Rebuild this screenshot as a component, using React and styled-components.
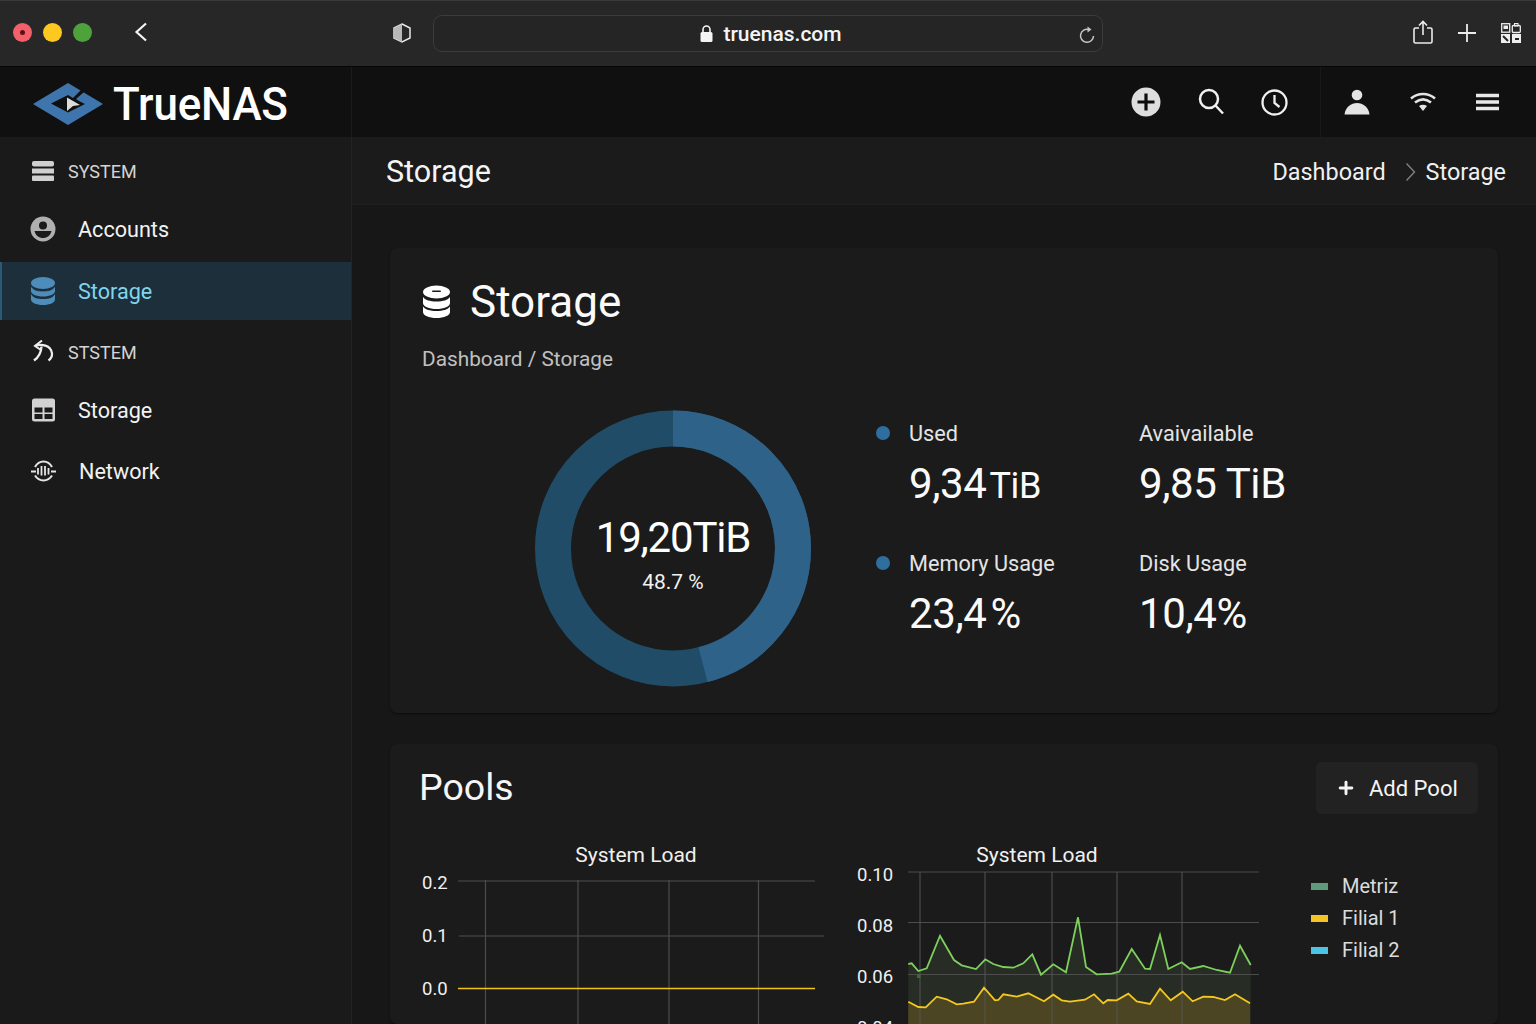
import styled, { createGlobalStyle } from 'styled-components'
import { Plus } from 'lucide-react'

const GlobalStyle = createGlobalStyle`
    html, body {
        margin: 0;
        height: 100%;
        background: #171717;
        overflow: hidden;
    }
    body {
        font-family: Roboto, "Liberation Sans", sans-serif;
        color: #f2f2f2;
    }
    * {
        box-sizing: border-box;
    }
`

// browser chrome

const Page = styled.div`
    display: flex;
    flex-direction: column;
    width: 1536px;
    height: 1024px;
    overflow: hidden;
`

const BrowserBar = styled.header`
    display: flex;
    align-items: center;
    flex: none;
    height: 67px;
    background: #272727;
    border-top: 1px solid #3a3a3a;
    border-bottom: 1px solid #050505;
`

const Lights = styled.div`
    display: flex;
    align-items: center;
    gap: 11px;
    margin-left: 13px;
    margin-bottom: 2px;
`

const Light = styled.span`
    display: flex;
    align-items: center;
    justify-content: center;
    width: 19px;
    height: 19px;
    border-radius: 50%;
    background: ${(p) => p.$color};

    i {
        width: 5px;
        height: 5px;
        border-radius: 50%;
        background: #5c1016;
    }
`

const ChromeIcon = styled.svg`
    display: block;
    flex: none;
    margin-left: ${(p) => p.$left || 0}px;
    margin-bottom: ${(p) => p.$bottom || 0}px;
`

const UrlBar = styled.div`
    display: flex;
    align-items: center;
    justify-content: center;
    position: relative;
    flex: none;
    width: 670px;
    height: 37px;
    margin-left: 21px;
    padding-left: 6px;
    gap: 10px;
    border: 1px solid #3c3c3c;
    border-radius: 9px;
    background: #252525;
    font-size: 21px;
    font-weight: 500;
    color: #f4f4f4;
`

const Reload = styled.svg`
    position: absolute;
    right: 6px;
    top: 10px;
`

// app top bar

const TopBar = styled.div`
    display: flex;
    flex: none;
    height: 70px;
    background: #101010;
`

const LogoCell = styled.div`
    display: flex;
    align-items: center;
    flex: none;
    width: 352px;
    padding: 3px 0 0 33px;
    gap: 10px;
    border-right: 1px solid #1b1b1b;
`

const LogoText = styled.span`
    font-size: 47px;
    font-weight: 500;
    line-height: 1;
    color: #fff;
    letter-spacing: -0.2px;
    transform: scaleX(0.935);
    transform-origin: left center;
`

const TopActions = styled.div`
    display: flex;
    align-items: center;
    flex: 1;
`

const ToolGroup = styled.div`
    display: flex;
    align-items: center;
    justify-content: flex-end;
    flex: 1;
    height: 100%;
    padding-right: 32px;
    gap: 37px;
`

const UserGroup = styled.div`
    display: flex;
    align-items: center;
    flex: none;
    width: 216px;
    height: 100%;
    padding-left: 23px;
    gap: 40px;
    border-left: 1px solid #191919;
`

// layout below the bars

const Body = styled.div`
    display: flex;
    flex: 1;
    min-height: 0;
`

const Sidebar = styled.nav`
    flex: none;
    width: 352px;
    padding-top: 5px;
    background: #1a1a1a;
    border-right: 1px solid #242424;
`

const NavRow = styled.div`
    display: flex;
    align-items: center;
    height: 58px;
    margin-top: ${(p) => p.$mt || 0}px;
    padding-left: ${(p) => (p.$active ? 28 : 30)}px;
    gap: ${(p) => (p.$heading ? 12 : 22)}px;
    background: ${(p) => (p.$active ? '#1e2f3c' : 'transparent')};
    border-left: ${(p) => (p.$active ? '2px solid #2b5a78' : 'none')};
    font-size: ${(p) => (p.$heading ? 18 : 21.6)}px;
    color: ${(p) => (p.$active ? '#7fd6ec' : p.$heading ? '#d4d4d4' : '#f2f2f2')};
`

const Main = styled.main`
    display: flex;
    flex-direction: column;
    flex: 1;
    min-width: 0;
`

const PageHeader = styled.div`
    display: flex;
    align-items: center;
    justify-content: space-between;
    flex: none;
    height: 68px;
    padding: 0 30px 0 34px;
    background: #1b1b1b;
    border-bottom: 1px solid #202020;
`

const PageTitle = styled.h1`
    margin: 2px 0 0;
    font-size: 30.5px;
    font-weight: 400;
    color: #f4f4f4;
`

const Crumbs = styled.div`
    display: flex;
    align-items: center;
    padding-top: 2px;
    font-size: 23.4px;
    color: #f0f0f0;

    svg {
        margin: 0 10px 0 19px;
    }
`

const Content = styled.div`
    display: flex;
    flex-direction: column;
    gap: 31px;
    padding: 43px 38px 0;
`

const Card = styled.section`
    flex: none;
    background: #1b1b1b;
    border-radius: 7px;
    box-shadow: 0 1px 2px rgba(0, 0, 0, 0.5);
`

const StorageCard = styled(Card)`
    height: 465px;
    padding: 28px 32px 26px;
`

const CardTitle = styled.div`
    display: flex;
    align-items: center;
    gap: 19px;
    height: 52px;
    font-size: 44px;
    color: #fafafa;
`

const CardSub = styled.div`
    margin-top: 18px;
    font-size: 20.8px;
    line-height: 26px;
    color: #c0c0c0;
`

const Overview = styled.div`
    display: flex;
    margin-top: 38px;
    margin-left: 113px;
    gap: 65px;
`

const Donut = styled.div`
    position: relative;
    flex: none;
    width: 276px;
    height: 277px;
`

const DonutText = styled.div`
    position: absolute;
    inset: 0;
    display: flex;
    flex-direction: column;
    align-items: center;
    justify-content: center;
    padding-top: 14px;
`

const DonutValue = styled.div`
    font-size: 42px;
    line-height: 50px;
    letter-spacing: -1.2px;
    color: #fff;
`

const DonutPct = styled.div`
    margin-top: 6px;
    margin-bottom: 3px;
    font-size: 21px;
    line-height: 26px;
    color: #f2f2f2;
`

const Stats = styled.div`
    display: grid;
    grid-template-columns: 263px 240px;
    grid-auto-rows: 130px;
    padding-top: 10px;
`

const StatLabel = styled.div`
    display: flex;
    align-items: center;
    gap: 19px;
    height: 26px;
    font-size: 21.7px;
    color: #e4e4e4;
`

const Dot = styled.span`
    flex: none;
    width: 14px;
    height: 14px;
    border-radius: 50%;
    background: #2f6f9f;
`

const StatValue = styled.div`
    margin-top: 13px;
    padding-left: ${(p) => (p.$indent ? 33 : 0)}px;
    font-size: 42px;
    line-height: 50px;
    letter-spacing: -0.4px;
    word-spacing: ${(p) => (p.$tight ? -6 : 0)}px;
    color: #fafafa;

    small {
        margin-left: 3px;
        font-size: 36px;
    }
`

const PoolsCard = styled(Card)`
    padding: 18px 20px 0 29px;
`

const PoolsHead = styled.div`
    display: flex;
    align-items: center;
    justify-content: space-between;
`

const PoolsTitle = styled.h2`
    margin: 0 0 2px;
    font-size: 37.5px;
    font-weight: 400;
    color: #f6f6f6;
`

const AddButton = styled.button`
    display: flex;
    align-items: center;
    gap: 13px;
    height: 52px;
    width: 162px;
    padding: 0 0 0 20px;
    border: 0;
    border-radius: 6px;
    background: #222222;
    font-family: inherit;
    font-size: 22px;
    color: #f4f4f4;
`

const ChartRow = styled.div`
    display: flex;
    align-items: flex-start;
    gap: 20px;
    margin-top: 26px;
    margin-left: 1px;
`

const ChartSvg = styled.svg`
    display: block;
    flex: none;

    text {
        font-family: Roboto, "Liberation Sans", sans-serif;
        fill: #f0f0f0;
    }
`

const Legend = styled.div`
    display: flex;
    flex-direction: column;
    gap: 6px;
    margin-left: 21px;
    margin-top: 33px;
`

const LegendItem = styled.div`
    display: flex;
    align-items: center;
    gap: 14px;
    height: 26px;
    font-size: 20px;
    color: #dcdcdc;

    i {
        width: 17px;
        height: 7px;
        background: ${(p) => p.$color};
    }
`

// icons

const TrueNasLogo = () => (
    <svg width="70" height="42" viewBox="33 83 70 42">
        <polygon points="33,104 68,83 103,104 68,125" fill="#3f75ad" />
        <polygon points="51,103.500 68,95 73,98 81,90 84,92 76,99 79,101 85,104 68,112.500" fill="#101010" />
        <polygon points="67,97.500 80,105 73,106 67,111" fill="#dcdcdc" />
    </svg>
)

const ShieldIcon = () => (
    <ChromeIcon $left={244} $bottom={2} width="20" height="20" viewBox="0 0 20 20">
        <polygon points="10,1 18,5 18,15 10,19 2,15 2,5" fill="none" stroke="#e8e8e8" strokeWidth="1.500" />
        <polygon points="10,1 2,5 2,15 10,19" fill="#b8b8b8" />
    </ChromeIcon>
)

const LockIcon = () => (
    <svg width="13" height="17" viewBox="0 0 13 17">
        <path d="M3 7V4.500a3.500 3.500 0 0 1 7 0V7" fill="none" stroke="#f4f4f4" strokeWidth="1.600" />
        <rect x="0.500" y="7" width="12" height="10" rx="1.500" fill="#f4f4f4" />
    </svg>
)

const ReloadIcon = () => (
    <Reload width="18" height="18" viewBox="0 0 18 18">
        <path d="M11 3.600a6.500 6.500 0 1 0 4.500 6.400" fill="none" stroke="#c6c6c6" strokeWidth="1.500" />
        <path d="M9.500 0.500L13.500 3.400L9.500 6.500Z" fill="#c6c6c6" />
    </Reload>
)

const ShareIcon = () => (
    <ChromeIcon $left={310} $bottom={4} width="20" height="24" viewBox="0 0 20 24">
        <path d="M6 8H2.500A1.500 1.500 0 0 0 1 9.500v12A1.500 1.500 0 0 0 2.500 23h15a1.500 1.500 0 0 0 1.500-1.500v-12A1.500 1.500 0 0 0 17.500 8H14" fill="none" stroke="#ececec" strokeWidth="1.600" />
        <path d="M10 15V2M6 5.500L10 1.500L14 5.500" fill="none" stroke="#ececec" strokeWidth="1.600" />
    </ChromeIcon>
)

const GridIcon = () => (
    <ChromeIcon $left={24} $bottom={2} width="20" height="20" viewBox="0 0 20 20">
        <rect x="0.700" y="0.700" width="8" height="8.500" fill="none" stroke="#eee" strokeWidth="1.300" />
        <rect x="2.500" y="2.500" width="4.500" height="3.500" fill="#eee" />
        <rect x="11.300" y="2.500" width="8" height="7" rx="1" fill="none" stroke="#eee" strokeWidth="1.300" />
        <rect x="13.500" y="0.500" width="3.500" height="2.500" fill="none" stroke="#eee" strokeWidth="1" />
        <rect x="0" y="11" width="9" height="9" fill="#eee" />
        <path d="M2 13l5 5" stroke="#222" strokeWidth="2" />
        <rect x="11" y="11" width="9" height="9" fill="#eee" />
        <rect x="14" y="15" width="4" height="2" fill="#222" />
    </ChromeIcon>
)

const AddCircleIcon = () => (
    <svg width="30" height="30" viewBox="0 0 30 30">
        <circle cx="15" cy="15" r="14.500" fill="#dedede" />
        <path d="M15 6.500v17M6.500 15h17" stroke="#0d0d0d" strokeWidth="3.200" />
    </svg>
)

const SearchIcon = () => (
    <svg width="26" height="28" viewBox="0 0 26 28">
        <circle cx="11" cy="11" r="9" fill="none" stroke="#f0f0f0" strokeWidth="2.500" />
        <path d="M17.500 17.500L25 25.500" stroke="#f0f0f0" strokeWidth="2.500" />
    </svg>
)

const ClockIcon = () => (
    <svg width="27" height="27" viewBox="0 0 27 27">
        <circle cx="13.500" cy="13.500" r="12" fill="none" stroke="#f0f0f0" strokeWidth="2.300" />
        <path d="M13.500 6v8l5 4" fill="none" stroke="#f0f0f0" strokeWidth="2.300" />
    </svg>
)

const PersonIcon = () => (
    <svg width="26" height="26" viewBox="0 0 26 26">
        <circle cx="13" cy="6" r="5.300" fill="#e4e4e4" />
        <path d="M0.500 25.500C1.500 18 7 14 13 14s11.500 4 12.500 11.500Z" fill="#e4e4e4" />
    </svg>
)

const WifiIcon = () => (
    <svg width="26" height="20" viewBox="0 0 26 20">
        <path d="M1 6.500C8 0.500 18 0.500 25 6.500" fill="none" stroke="#e4e4e4" strokeWidth="2.600" />
        <path d="M5 10.500C10 6.500 16 6.500 21 10.500" fill="none" stroke="#e4e4e4" strokeWidth="2.600" />
        <path d="M9 14C11.500 12.300 14.500 12.300 17 14L13 19Z" fill="#e4e4e4" />
    </svg>
)

const MenuIcon = () => (
    <svg width="23" height="18" viewBox="0 0 23 18">
        <path d="M0 2.500h23M0 9h23M0 15.500h23" stroke="#e8e8e8" strokeWidth="3.600" />
    </svg>
)

const ServerIcon = () => (
    <svg width="26" height="22" viewBox="0 0 26 22">
        <rect x="2" y="1" width="22" height="5.500" rx="2" fill="#d0d0d0" />
        <rect x="2" y="8.500" width="22" height="5" fill="#d0d0d0" />
        <rect x="2" y="15.500" width="22" height="5.500" rx="1" fill="#d0d0d0" />
    </svg>
)

const AccountIcon = () => (
    <svg width="26" height="26" viewBox="0 0 26 26">
        <circle cx="13" cy="13" r="12.500" fill="#b0b0b0" />
        <circle cx="13" cy="9.500" r="4" fill="#1a1a1a" />
        <path d="M4.500 15h17c-1 4.500-4.500 7-8.500 7s-7.500-2.500-8.500-7Z" fill="#1a1a1a" />
    </svg>
)

const StackIcon = ({ color, bg }) => (
    <svg width="26" height="30" viewBox="-1 0 26 30">
        <ellipse cx="12" cy="7" rx="12" ry="6" fill={color} />
        <path d="M0 10c2 4 6 5 12 5s10-1 12-5v5c0 3-5 5.500-12 5.500S0 18 0 15Z" fill={color} />
        <path d="M0 18c2 4 6 5 12 5s10-1 12-5v5.500c0 3-5 5.500-12 5.500S0 26.500 0 23.500Z" fill={color} />
        <path d="M0 10c2 4 6 5 12 5s10-1 12-5" fill="none" stroke={bg} strokeWidth="0.800" />
    </svg>
)

const UndoIcon = () => (
    <svg width="26" height="24" viewBox="0 0 26 24">
        <path d="M5 6C11 3.500 21 5 22 13.500c0.300 3.500-1.500 5.500-3.500 7" fill="none" stroke="#eee" strokeWidth="2.200" />
        <path d="M12 0.500L5 6L11 10" fill="none" stroke="#eee" strokeWidth="2" />
        <path d="M11.500 6.500C11 13 8.500 17.500 4 20.500" fill="none" stroke="#eee" strokeWidth="2.400" />
    </svg>
)

const TableIcon = () => (
    <svg width="26" height="24" viewBox="0 0 26 24">
        <rect x="2" y="0.500" width="23" height="23" rx="2.500" fill="#d2d2d2" />
        <rect x="4.500" y="9.500" width="8" height="5" fill="#1a1a1a" />
        <rect x="14.500" y="9.500" width="8" height="5" fill="#1a1a1a" />
        <rect x="4.500" y="16" width="8" height="5" fill="#1a1a1a" />
        <rect x="14.500" y="16" width="8" height="5" fill="#1a1a1a" />
    </svg>
)

const NetworkIcon = () => (
    <svg width="27" height="24" viewBox="0 0 27 24">
        <path d="M5 8C9 0.500 18 0.500 22 8M5 16.500C9 23 18 23 22 16.500" fill="none" stroke="#e4e4e4" strokeWidth="2" />
        <path d="M1 12.500H6M21 12.500H26" stroke="#e4e4e4" strokeWidth="2.200" />
        <path d="M8 9V15.500M11.500 7V16.500M15 7V16.500M18.500 9V15.500" stroke="#e4e4e4" strokeWidth="1.800" />
    </svg>
)

const SmallStack = () => (
    <svg width="29" height="34" viewBox="0 0 29 34">
        <ellipse cx="14.500" cy="7" rx="13.500" ry="6.500" fill="#fff" />
        <rect x="10" y="5.500" width="9" height="1.600" rx="0.800" fill="#1b1b1b" />
        <path d="M1 12c2 3 7 4.500 13.500 4.500S26 15 28 12v6c0 3.500-6 6-13.500 6S1 21.500 1 18Z" fill="#fff" />
        <path d="M1 21.500c2 3 7 4.500 13.500 4.500S26 24.500 28 21.500V27c0 3.500-6 6-13.500 6S1 30.500 1 27Z" fill="#fff" />
    </svg>
)

const Chevron = () => (
    <svg width="11" height="20" viewBox="0 0 11 20">
        <path d="M1.500 1.500L9.500 10L1.500 18.500" fill="none" stroke="#808080" strokeWidth="1.400" />
    </svg>
)

// chart data, x/y as read off the reference (3x crop from 840,820)

const greenLine = [[205,432],[215,430],[235,453],[260,445],[300,347],[342,420],[365,436],[408,447],[436,418],[460,432],[490,441],[520,443],[550,430],[577,403],[603,464],[640,433],[678,457],[714,292],[738,441],[770,463],[815,461],[838,455],[875,387],[915,446],[930,447],[960,345],[985,447],[1025,427],[1050,447],[1090,438],[1130,450],[1170,458],[1200,377],[1232,435]]
const yellowLine = [[205,545],[235,561],[257,562],[290,530],[320,538],[350,553],[370,551],[402,545],[432,503],[465,541],[475,540],[490,523],[530,530],[565,520],[612,544],[640,524],[665,541],[690,545],[735,539],[762,523],[790,550],[803,540],[830,541],[865,521],[890,544],[930,552],[960,506],[992,541],[1028,515],[1058,544],[1090,530],[1120,531],[1155,540],[1185,523],[1230,550]]

const toPoints = (line) => line.map(([x, y]) => `${(840 + x / 3).toFixed(1)},${(820 + y / 3).toFixed(1)}`).join(' ')
const toArea = (line) => {
    const first = 840 + line[0][0] / 3
    const last = 840 + line[line.length - 1][0] / 3
    return `${first.toFixed(1)},1030 ${toPoints(line)} ${last.toFixed(1)},1030`
}

const EmptyChart = () => (
    <ChartSvg width="410" height="184" viewBox="420 840 410 184">
        <text x="636" y="862" fontSize="21" textAnchor="middle">System Load</text>
        <path d="M458 881H815M459 936H824" stroke="#4e4e4e" strokeWidth="1.200" />
        <path d="M485.500 880V1024M578 880V1024M669 880V1024M758.500 880V1024" stroke="#4c4c4c" strokeWidth="1.200" />
        <path d="M458 988.500H815" stroke="#f0c419" strokeWidth="1.400" />
        <text x="422" y="889" fontSize="18.500">0.2</text>
        <text x="422" y="942" fontSize="18.500">0.1</text>
        <text x="422" y="995" fontSize="18.500">0.0</text>
    </ChartSvg>
)

const LoadChart = () => (
    <ChartSvg width="420" height="184" viewBox="850 840 420 184">
        <text x="1037" y="862" fontSize="21" textAnchor="middle">System Load</text>
        <polygon points={toArea(greenLine)} fill="#272d24" />
        <polygon points={toArea(yellowLine)} fill="#4c4524" />
        <path d="M908 872H1259M908 922.500H1259M908 974.500H1259" stroke="#4c4c4c" strokeWidth="1" />
        <path d="M920 872V1024M985 872V1024M1052 872V1024M1117 872V1024M1182 872V1024" stroke="#555" strokeWidth="1" />
        <rect x="917" y="974.500" width="3.500" height="3.500" fill="#3f6a30" />
        <polyline points={toPoints(greenLine)} fill="none" stroke="#7ed05c" strokeWidth="1.800" />
        <polyline points={toPoints(yellowLine)} fill="none" stroke="#f4c81e" strokeWidth="1.800" />
        <text x="857" y="881" fontSize="18.500">0.10</text>
        <text x="857" y="932" fontSize="18.500">0.08</text>
        <text x="857" y="983" fontSize="18.500">0.06</text>
        <text x="857" y="1034" fontSize="18.500">0.04</text>
    </ChartSvg>
)

const App = () => {
    return (
        <Page>
            <GlobalStyle />
            <BrowserBar>
                <Lights>
                    <Light $color="#f2606a"><i /></Light>
                    <Light $color="#fdc81f" />
                    <Light $color="#4ea23c" />
                </Lights>
                <ChromeIcon $left={42} $bottom={3} width="14" height="20" viewBox="0 0 14 20">
                    <path d="M12 1.500L2.500 10L12 18.500" fill="none" stroke="#f4f4f4" strokeWidth="2.200" />
                </ChromeIcon>
                <ShieldIcon />
                <UrlBar>
                    <LockIcon />
                    truenas.com
                    <ReloadIcon />
                </UrlBar>
                <ShareIcon />
                <ChromeIcon $left={24} $bottom={2} width="20" height="20" viewBox="0 0 20 20">
                    <path d="M10 1v18M1 10h18" stroke="#ececec" strokeWidth="1.800" />
                </ChromeIcon>
                <GridIcon />
            </BrowserBar>

            <TopBar>
                <LogoCell>
                    <TrueNasLogo />
                    <LogoText>TrueNAS</LogoText>
                </LogoCell>
                <TopActions>
                    <ToolGroup>
                        <AddCircleIcon />
                        <SearchIcon />
                        <ClockIcon />
                    </ToolGroup>
                    <UserGroup>
                        <PersonIcon />
                        <WifiIcon />
                        <MenuIcon />
                    </UserGroup>
                </TopActions>
            </TopBar>

            <Body>
                <Sidebar>
                    <NavRow $heading><ServerIcon />SYSTEM</NavRow>
                    <NavRow><AccountIcon />Accounts</NavRow>
                    <NavRow $active $mt={4}><StackIcon color="#4c8dbb" bg="#1e2f3c" />Storage</NavRow>
                    <NavRow $heading $mt={3}><UndoIcon />STSTEM</NavRow>
                    <NavRow><TableIcon />Storage</NavRow>
                    <NavRow $mt={3}><NetworkIcon />Network</NavRow>
                </Sidebar>

                <Main>
                    <PageHeader>
                        <PageTitle>Storage</PageTitle>
                        <Crumbs>
                            <span>Dashboard</span>
                            <Chevron />
                            <span>Storage</span>
                        </Crumbs>
                    </PageHeader>

                    <Content>
                        <StorageCard>
                            <CardTitle><SmallStack />Storage</CardTitle>
                            <CardSub>Dashboard / Storage</CardSub>
                            <Overview>
                                <Donut>
                                    <svg width="276" height="277" viewBox="0 0 276 277">
                                        <circle cx="138" cy="138.500" r="120" fill="none" stroke="#214c68" strokeWidth="36" />
                                        <circle
                                            cx="138"
                                            cy="138.500"
                                            r="120"
                                            fill="none"
                                            stroke="#2f6288"
                                            strokeWidth="36"
                                            pathLength="360"
                                            strokeDasharray="165.500 360"
                                            transform="rotate(-90 138 138.500)"
                                        />
                                    </svg>
                                    <DonutText>
                                        <DonutValue>19,20TiB</DonutValue>
                                        <DonutPct>48.7 %</DonutPct>
                                    </DonutText>
                                </Donut>
                                <Stats>
                                    <div>
                                        <StatLabel><Dot />Used</StatLabel>
                                        <StatValue $indent>9,34<small>TiB</small></StatValue>
                                    </div>
                                    <div>
                                        <StatLabel>Avaivailable</StatLabel>
                                        <StatValue>9,85 TiB</StatValue>
                                    </div>
                                    <div>
                                        <StatLabel><Dot />Memory Usage</StatLabel>
                                        <StatValue $indent $tight>23,4 %</StatValue>
                                    </div>
                                    <div>
                                        <StatLabel>Disk Usage</StatLabel>
                                        <StatValue>10,4%</StatValue>
                                    </div>
                                </Stats>
                            </Overview>
                        </StorageCard>

                        <PoolsCard>
                            <PoolsHead>
                                <PoolsTitle>Pools</PoolsTitle>
                                <AddButton><Plus size={20} strokeWidth={3.500} />Add Pool</AddButton>
                            </PoolsHead>
                            <ChartRow>
                                <EmptyChart />
                                <LoadChart />
                                <Legend>
                                    <LegendItem $color="#5f9a7c"><i />Metriz</LegendItem>
                                    <LegendItem $color="#f4c426"><i />Filial 1</LegendItem>
                                    <LegendItem $color="#4cc4e6"><i />Filial 2</LegendItem>
                                </Legend>
                            </ChartRow>
                        </PoolsCard>
                    </Content>
                </Main>
            </Body>
        </Page>
    )
}

export default App
